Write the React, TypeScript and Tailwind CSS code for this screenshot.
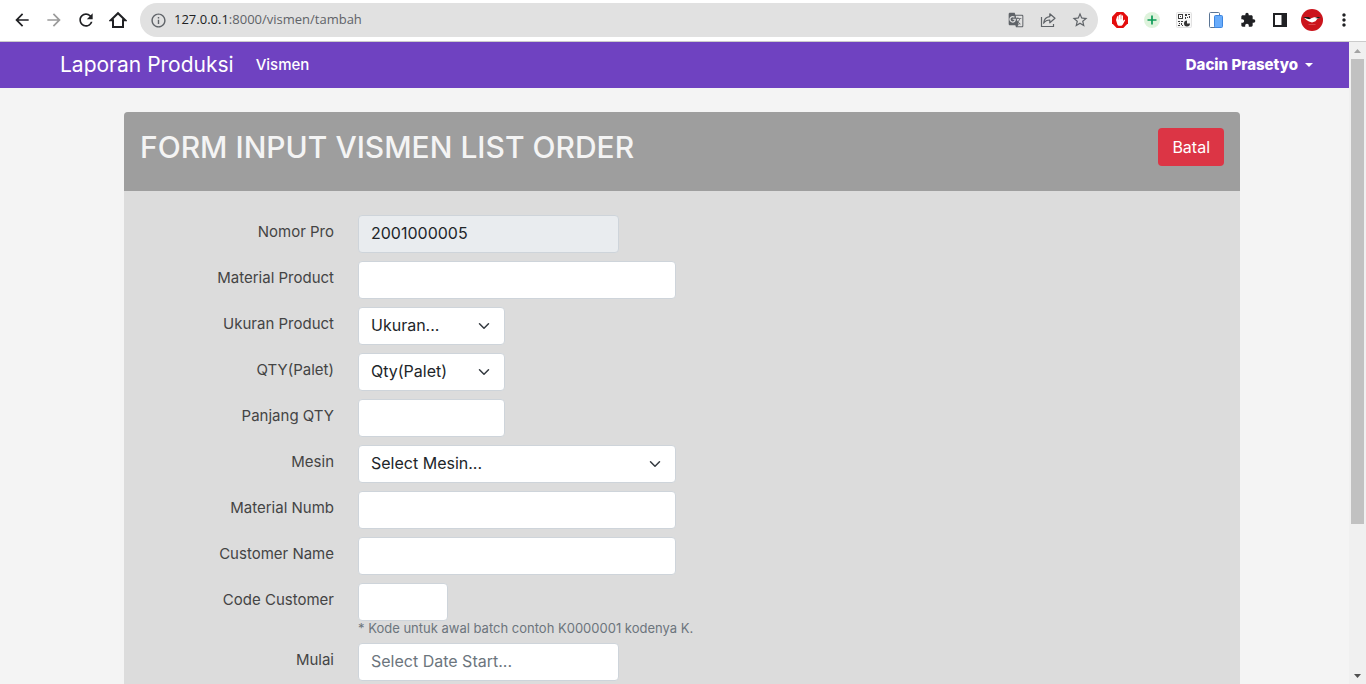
import type { ReactNode } from 'react';
import { MdArrowBack, MdArrowForward, MdExtension, MdGTranslate, MdInfoOutline, MdMoreVert, MdRefresh, MdStarBorder } from 'react-icons/md';

const control =
  'block h-[38px] rounded border border-[#ced4da] px-3 pb-0.5 text-base text-[#212529] placeholder:text-[#6c757d] focus:outline-2 focus:outline-[#86b7fe]';

function IconButton({ label, children }: { label: string; children: ReactNode }) {
  return (
    <button type="button" aria-label={label} className="flex h-8 w-8 shrink-0 items-center justify-center">
      {children}
    </button>
  );
}

function HomeIcon() {
  return (
    <svg width="18" height="18" viewBox="0 0 18 18" fill="none" stroke="#202124" strokeWidth="2">
      <path d="M1.8 9.2H4v6.8h10V9.2h2.2L9 2.2z" strokeLinejoin="miter" />
    </svg>
  );
}

function ShareIcon() {
  return (
    <svg width="16" height="16" viewBox="0 0 16 16" fill="none" stroke="#5f6368" strokeWidth="1.2">
      <path d="M1.5 5v9.5h12v-2.500" />
      <path d="M9.8 1.800v2.800C6 5 4 7.400 3.600 11.200c1.500-2.200 3.300-3.200 6.200-3.200v2.800l5.200-4.500z" strokeLinejoin="round" />
    </svg>
  );
}

function BlockerIcon() {
  return (
    <svg width="16" height="16" viewBox="0 0 16 16">
      <path d="M4.700 0h6.600L16 4.700v6.600L11.300 16H4.700L0 11.300V4.700z" fill="#e40d0d" />
      <path
        d="M4 8l1.300 4.200c.3 1 1.100 1.600 2.300 1.600h1c1 0 1.700-.4 2.200-1.300l2.200-3.900c.3-.8-.7-1.300-1.200-.6l-.8 1V3.900c0-.9-1.300-.9-1.300 0v3.300h-.2V2.800c0-.9-1.300-.9-1.300 0v4.400H8V3.300c0-.9-1.300-.9-1.300 0v4.100h-.3V4.600c0-.9-1.300-.9-1.300 0z"
        fill="#fff"
      />
    </svg>
  );
}

function PlusIcon() {
  return (
    <svg width="16" height="16" viewBox="0 0 16 16">
      <circle cx="8" cy="8" r="8" fill="#def3dc" />
      <path d="M8 3.500v9M3.500 8h9" stroke="#0c9b58" strokeWidth="1.700" />
    </svg>
  );
}

function QrIcon() {
  return (
    <svg width="16" height="16" viewBox="0 0 16 16">
      <rect x=".5" y=".5" width="15" height="15" rx="1" fill="#f7f7f7" stroke="#e2e2e2" />
      <path
        d="M2 2h5v5H2zM9 2h2v2H9zM12 2h2v1h-2zM13 4h1v2h-1zM9 5h1v2H9zM11 5h1v1h-1zM2 9h2v1H2zM5 9h2v1H5zM3 11h1v1H3zM5 11h1v2H5zM2 13h2v1H2zM6 13h1v1H6z"
        fill="#3c3c3c"
      />
      <path d="M3 3h3v3H3z" fill="#fff" />
      <path d="M4 4h1v1H4z" fill="#3c3c3c" />
      <path d="M11 8.500v3h3a3 3 0 1 1-3-3z" fill="#333" />
    </svg>
  );
}

function DevicesIcon() {
  return (
    <svg width="16" height="16" viewBox="0 0 16 16">
      <rect x="1.500" y=".5" width="10" height="15" rx="1" fill="#fff" stroke="#5b7594" />
      <rect x="6.500" y="3.500" width="8" height="12" rx="1" fill="#69acfb" stroke="#3d86e0" />
    </svg>
  );
}

function SidePanelIcon() {
  return (
    <svg width="14" height="14" viewBox="0 0 14 14">
      <path d="M0 0h14v14H0zM2 2v10h6.500V2z" fill="#202124" fillRule="evenodd" />
    </svg>
  );
}

function AvatarIcon() {
  return (
    <svg width="22" height="22" viewBox="0 0 22 22">
      <circle cx="11" cy="11" r="11" fill="#cb141c" />
      <path d="M3 8.800l6.500.7 3.500-1.300h6.500l-3.300 1.800-1.700 2.300-3.500 1.200-3-.9-2.500-1.600z" fill="#fff" />
      <path d="M2 8h5.500l2.500 1.200-1.800 1-3-.8zM14 9l2.500-1H20l-2.800 1.400z" fill="#1a1a1a" />
      <path d="M7.500 15.500h7" stroke="#e0565b" strokeWidth=".8" />
    </svg>
  );
}

function BrowserBar() {
  return (
    <div className="flex h-[42px] shrink-0 items-start border-b border-[#cbcbcb] bg-white px-1.5 pt-[3px] text-[#202124]">
      <div className="flex h-[34px] items-center">
        <IconButton label="Back"><MdArrowBack size={20} /></IconButton>
        <IconButton label="Forward"><MdArrowForward size={20} className="text-[#9b9b9b]" /></IconButton>
        <IconButton label="Reload"><MdRefresh size={20} /></IconButton>
        <IconButton label="Home"><HomeIcon /></IconButton>
      </div>
      <div className="mx-1.5 flex h-[34px] min-w-0 flex-1 items-center rounded-full bg-[#e1e1e1] pr-0.5 pl-2.5 text-[#5f6368]">
        <MdInfoOutline size={17} className="shrink-0" />
        <div className="min-w-0 flex-1 truncate pl-[7px] font-['Open_Sans',sans-serif] text-[13px]">
          <span className="text-[#202124]">127.0.0.1</span>:8000/vismen/tambah
        </div>
        <IconButton label="Translate"><MdGTranslate size={16} /></IconButton>
        <IconButton label="Share"><ShareIcon /></IconButton>
        <IconButton label="Bookmark"><MdStarBorder size={18} /></IconButton>
      </div>
      <div className="flex h-[34px] items-center">
        <IconButton label="Ad blocker"><BlockerIcon /></IconButton>
        <IconButton label="Add"><PlusIcon /></IconButton>
        <IconButton label="QR code"><QrIcon /></IconButton>
        <IconButton label="Devices"><DevicesIcon /></IconButton>
        <IconButton label="Extensions"><MdExtension size={16} /></IconButton>
        <IconButton label="Side panel"><SidePanelIcon /></IconButton>
        <IconButton label="Profile"><AvatarIcon /></IconButton>
        <IconButton label="Menu"><MdMoreVert size={20} /></IconButton>
      </div>
    </div>
  );
}

function Navbar() {
  return (
    <nav className="flex h-[46px] items-center bg-[#6f42c1] pr-9 pl-[60px] text-white">
      <a href="#home" className="text-[21px]">Laporan Produksi</a>
      <a href="#vismen" className="ml-[22px] text-[15px] font-medium">Vismen</a>
      <button type="button" className="ml-auto flex items-center gap-[7px] text-[15px] font-extrabold">
        Dacin Prasetyo
        <svg width="8" height="4" viewBox="0 0 8 4" fill="currentColor"><path d="M0 0h8L4 4z" /></svg>
      </button>
    </nav>
  );
}

function Field({ id, label, help, children }: { id: string; label: string; help?: string; children: ReactNode }) {
  return (
    <div className="flex gap-6">
      <label htmlFor={id} className="w-[194px] shrink-0 pt-[7px] text-right text-[15px] leading-5 text-[#444]">
        {label}
      </label>
      <div>
        {children}
        {help && <p className="text-[13px] leading-[14px] text-[#6c757d]">{help}</p>}
      </div>
    </div>
  );
}

function Select({ id, text, width }: { id: string; text: string; width: string }) {
  return (
    <div className={`relative ${width}`}>
      <select id={id} className={`${control} w-full appearance-none bg-white pr-9`}>
        <option>{text}</option>
      </select>
      <svg
        className="pointer-events-none absolute top-[13px] right-[15px]"
        width="12"
        height="12"
        viewBox="0 0 16 16"
        fill="none"
        stroke="#343a40"
        strokeWidth="2"
        strokeLinecap="round"
        strokeLinejoin="round"
      >
        <path d="m2 5 6 6 6-6" />
      </svg>
    </div>
  );
}

function OrderForm() {
  return (
    <section className="mx-auto max-w-[1116px] overflow-hidden rounded bg-[#dcdcdc]">
      <header className="flex h-[79px] items-start justify-between bg-[#9e9e9e] px-4 pt-4">
        <h1 className="text-[30px] leading-[38px] font-medium text-[#f4f4f4]">FORM INPUT VISMEN LIST ORDER</h1>
        <button type="button" className="h-[38px] rounded bg-[#dc3545] px-3.5 text-base text-white">Batal</button>
      </header>
      <form className="flex flex-col gap-2 px-4 py-6">
        <Field id="nomor" label="Nomor Pro">
          <input id="nomor" readOnly defaultValue="2001000005" className={`${control} w-[261px] bg-[#e9ecef]`} />
        </Field>
        <Field id="material" label="Material Product">
          <input id="material" className={`${control} w-[318px] bg-white`} />
        </Field>
        <Field id="ukuran" label="Ukuran Product">
          <Select id="ukuran" text="Ukuran..." width="w-[147px]" />
        </Field>
        <Field id="qty" label="QTY(Palet)">
          <Select id="qty" text="Qty(Palet)" width="w-[147px]" />
        </Field>
        <Field id="panjang" label="Panjang QTY">
          <input id="panjang" className={`${control} w-[147px] bg-white`} />
        </Field>
        <Field id="mesin" label="Mesin">
          <Select id="mesin" text="Select Mesin..." width="w-[318px]" />
        </Field>
        <Field id="numb" label="Material Numb">
          <input id="numb" className={`${control} w-[318px] bg-white`} />
        </Field>
        <Field id="customer" label="Customer Name">
          <input id="customer" className={`${control} w-[318px] bg-white`} />
        </Field>
        <Field id="code" label="Code Customer" help="* Kode untuk awal batch contoh K0000001 kodenya K.">
          <input id="code" className={`${control} w-[90px] bg-white`} />
        </Field>
        <Field id="mulai" label="Mulai">
          <input id="mulai" placeholder="Select Date Start..." className={`${control} w-[261px] bg-white`} />
        </Field>
      </form>
    </section>
  );
}

function Scrollbar() {
  return (
    <div aria-hidden="true" className="flex w-[17px] shrink-0 flex-col bg-[#f0f0f0]">
      <div className="flex h-[17px] items-center justify-center">
        <svg width="7" height="4" viewBox="0 0 7 4" fill="#a3a3a3"><path d="M0 4h7L3.500 0z" /></svg>
      </div>
      <div className="min-h-0 flex-1 px-0.5">
        <div className="h-[76.5%] bg-[#c1c1c1]" />
      </div>
      <div className="flex h-[17px] items-center justify-center">
        <svg width="7" height="4" viewBox="0 0 7 4" fill="#505050"><path d="M0 0h7L3.500 4z" /></svg>
      </div>
    </div>
  );
}

export default function App() {
  return (
    <div className="flex h-screen flex-col overflow-hidden font-[Inter,sans-serif]">
      <BrowserBar />
      <div className="flex min-h-0 flex-1">
        <div className="min-w-0 flex-1 overflow-hidden bg-[#f4f4f4]">
          <Navbar />
          <main className="pt-6 pl-[15px]">
            <OrderForm />
          </main>
        </div>
        <Scrollbar />
      </div>
    </div>
  );
}
